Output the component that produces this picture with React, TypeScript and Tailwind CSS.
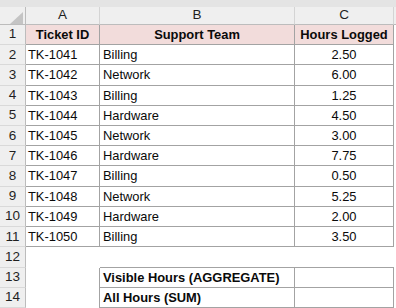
import React from "react";

type Row = { id: string; team: string; hours: string };

const rows: Row[] = [
  { id: "TK-1041", team: "Billing", hours: "2.50" },
  { id: "TK-1042", team: "Network", hours: "6.00" },
  { id: "TK-1043", team: "Billing", hours: "1.25" },
  { id: "TK-1044", team: "Hardware", hours: "4.50" },
  { id: "TK-1045", team: "Network", hours: "3.00" },
  { id: "TK-1046", team: "Hardware", hours: "7.75" },
  { id: "TK-1047", team: "Billing", hours: "0.50" },
  { id: "TK-1048", team: "Network", hours: "5.25" },
  { id: "TK-1049", team: "Hardware", hours: "2.00" },
  { id: "TK-1050", team: "Billing", hours: "3.50" },
];

const rowHead =
  "flex items-center justify-center bg-[#efefef] border-r border-b border-r-[#bcbcbc] border-b-[#d9d9d9] text-[13.5px] text-[#1f1f1f]";
const colHead =
  "flex items-center justify-center bg-[#efefef] border-r border-b border-r-[#d4d4d4] border-b-[#bcbcbc] text-[13.5px] text-[#1f1f1f]";
const cell = "flex items-center border-r border-b border-[#a3a3a3] overflow-hidden whitespace-nowrap";

export default function App() {
  return (
    <div
      className="w-[396px] h-[308px] bg-white overflow-hidden text-[12.9px] text-[#0a0a0a]"
      style={{ fontFamily: '"Liberation Sans", Arial, sans-serif' }}
    >
      <div className="grid h-full grid-cols-[26px_74px_195px_99px_1fr] grid-rows-[7px_18px_repeat(14,minmax(0,1fr))]">
        {/* top strip */}
        <div className="col-span-5 bg-[#e4e4e4]" />

        {/* column headers */}
        <div className="relative bg-[#efefef] border-r border-b border-r-[#bcbcbc] border-b-[#bcbcbc]">
          <svg className="absolute left-[10px] top-[5px]" width="13" height="12" viewBox="0 0 13 12">
            <polygon points="13,0 13,12 0,12" fill="#c4c4c4" />
          </svg>
        </div>
        <div className={colHead}>A</div>
        <div className={colHead}>B</div>
        <div className={colHead}>C</div>
        <div className="bg-[#efefef] border-b border-[#bcbcbc]" />

        {/* row 1 */}
        <div className={rowHead}>1</div>
        <div className={`${cell} justify-center bg-[#f2dcdb] font-bold`}>Ticket ID</div>
        <div className={`${cell} justify-center bg-[#f2dcdb] font-bold`}>Support Team</div>
        <div className={`${cell} justify-center bg-[#f2dcdb] font-bold`}>Hours Logged</div>
        <div />

        {rows.map((r, i) => (
          <React.Fragment key={r.id}>
            <div className={rowHead}>{i + 2}</div>
            <div className={`${cell} pl-[2px]`}>{r.id}</div>
            <div className={`${cell} pl-[3px]`}>{r.team}</div>
            <div className={`${cell} justify-center`}>{r.hours}</div>
            <div />
          </React.Fragment>
        ))}

        {/* row 12 */}
        <div className={rowHead}>12</div>
        <div />
        <div className="border-b border-[#a3a3a3]" />
        <div className="border-b border-[#a3a3a3]" />
        <div />

        {/* row 13 */}
        <div className={rowHead}>13</div>
        <div className="border-r border-[#a3a3a3]" />
        <div className={`${cell} pl-[3px] font-bold`}>Visible Hours (AGGREGATE)</div>
        <div className={cell} />
        <div />

        {/* row 14 */}
        <div className={rowHead}>14</div>
        <div className="border-r border-[#a3a3a3]" />
        <div className={`${cell} pl-[3px] font-bold`}>All Hours (SUM)</div>
        <div className={cell} />
        <div />
      </div>
    </div>
  );
}
